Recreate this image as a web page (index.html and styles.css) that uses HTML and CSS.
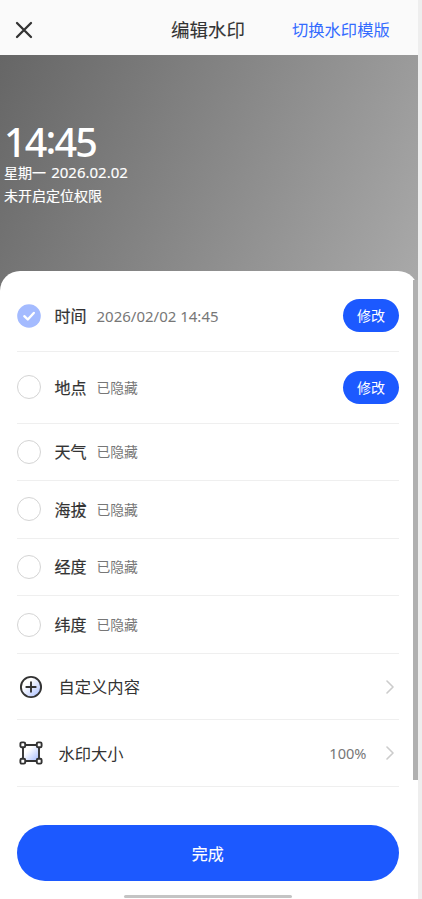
FILE: index.html
```html
<!DOCTYPE html>
<html lang="zh-CN">
<head>
<meta charset="utf-8">
<title>编辑水印</title>
<link rel="stylesheet" href="styles.css">
</head>
<body>
<div class="screen">
  <header class="bar">
    <svg class="close" viewBox="0 0 18 18"><path d="M2 2 16 16M16 2 2 16"/></svg>
    <h1 class="title">编辑水印</h1>
    <a class="switch">切换水印模版</a>
  </header>
  <section class="preview">
    <div class="clock">14<span class="colon">:</span>45</div>
    <div class="line">星期一 <span class="date">2026.02.02</span></div>
    <div class="line place">未开启定位权限</div>
  </section>
  <main class="sheet">
    <div class="row tall">
      <svg class="check" viewBox="0 0 24 24"><circle cx="12" cy="12" r="11.8" fill="#a4bbff"/><path d="m7.3 12.2 3.5 3.3 6-6.5"/></svg>
      <span class="name">时间</span><span class="value time">2026/02/02 14:45</span><button class="edit">修改</button>
    </div>
    <div class="row tall">
      <i class="radio"></i><span class="name">地点</span><span class="value">已隐藏</span><button class="edit">修改</button>
    </div>
    <div class="row"><i class="radio"></i><span class="name">天气</span><span class="value">已隐藏</span></div>
    <div class="row"><i class="radio"></i><span class="name">海拔</span><span class="value">已隐藏</span></div>
    <div class="row"><i class="radio"></i><span class="name">经度</span><span class="value">已隐藏</span></div>
    <div class="row"><i class="radio"></i><span class="name">纬度</span><span class="value">已隐藏</span></div>
    <div class="row link">
      <svg class="icon" viewBox="0 0 24 24">
        <defs><linearGradient id="tint" x1="0.1" y1="0.1" x2="1" y2="1"><stop offset="0.25" stop-color="#fff"/><stop offset="1" stop-color="#a3baff"/></linearGradient></defs>
        <circle cx="12" cy="12" r="10.1" fill="url(#tint)"/><path d="M12 7.3v9.4M7.3 12h9.4"/>
      </svg>
      <span class="label">自定义内容</span>
      <svg class="arrow" viewBox="0 0 8 14"><path d="m1 1 6 6-6 6"/></svg>
    </div>
    <div class="row link">
      <svg class="icon" viewBox="0 0 24 24">
        <path d="M4 4h16v16H4z" fill="url(#tint)"/>
        <g fill="#fff"><rect x="1.4" y="1.4" width="4.8" height="4.8" rx="1.3"/><rect x="17.8" y="1.4" width="4.8" height="4.8" rx="1.3"/><rect x="1.4" y="17.8" width="4.8" height="4.8" rx="1.3"/><rect x="17.8" y="17.8" width="4.8" height="4.8" rx="1.3"/></g>
      </svg>
      <span class="label">水印大小</span>
      <span class="percent">100%</span>
      <svg class="arrow" viewBox="0 0 8 14"><path d="m1 1 6 6-6 6"/></svg>
    </div>
    <button class="done">完成</button>
    <div class="home"></div>
  </main>
  <div class="thumb"></div>
</div>
</body>
</html>
```
FILE: styles.css
```css
* { box-sizing: border-box; }
body {
  margin: 0;
  height: 899px;
  overflow: hidden;
  background: #eee;
  font-family: "Noto Sans CJK SC", sans-serif;
  color: #333;
}
.screen {
  position: relative;
  width: 418px;
  height: 899px;
  display: flex;
  flex-direction: column;
  background: #fff;
}
.bar {
  height: 55px;
  flex: none;
  display: grid;
  grid-template-columns: 171px 121px 1fr;
  align-items: center;
  padding-top: 3px;
  background: #fafafa;
}
.close { width: 18px; height: 18px; margin: 1px 0 0 15px; fill: none; stroke: #333; stroke-width: 2.3; stroke-linecap: round; }
.title { margin: 0; font-size: 18.5px; font-weight: 400; -webkit-text-stroke: 0.1px; line-height: 24px; white-space: nowrap; }
.switch { font-size: 16.3px; line-height: 24px; color: #336bff; white-space: nowrap; }
.preview {
  height: 241px;
  flex: none;
  padding: 67px 0 0 4px;
  color: #fff;
  background: linear-gradient(116deg, #666 0%, #aaa 100%);
}
.clock { font-family: "Noto Sans", sans-serif; font-size: 39.5px; line-height: 41px; font-weight: 500; letter-spacing: -1.8px; white-space: nowrap; }
.colon { display: inline-block; transform: translateY(-3px); }
.line { font-size: 14px; line-height: 18px; font-weight: 400; -webkit-text-stroke: 0.15px; white-space: nowrap; }
.date { font-family: "Noto Sans", sans-serif; font-size: 15px; margin-left: 2px; }
.place { margin-top: 5px; }
.sheet {
  height: 628px;
  flex: none;
  margin-top: -25px;
  padding: 9.5px 19px 0 16.5px;
  border-radius: 20px 20px 0 0;
  background: #fff;
}
.row { height: 57.6px; display: flex; align-items: center; border-bottom: 1.3px solid #efefef; }
.tall { height: 71.5px; }
.link { height: 66.5px; }
.radio { width: 24px; height: 24px; border: 1.4px solid #d4d4d4; border-radius: 50%; flex: none; }
.check { width: 24px; height: 24px; flex: none; fill: none; stroke: #fff; }
.check path { stroke-width: 2.4; stroke-linecap: round; stroke-linejoin: round; }
.check circle { stroke: none; }
.name { margin-left: 14px; width: 42px; font-size: 16px; font-weight: 400; -webkit-text-stroke: 0.2px; line-height: 24px; }
.value { font-size: 13.8px; line-height: 22px; color: #777; white-space: nowrap; }
.name, .value, .label { margin-bottom: 1px; }
.time { font-family: "Noto Sans", sans-serif; font-size: 15px; margin-bottom: 0; }
.edit, .done { border: 0; padding: 0; color: #fff; background: #1c59ff; font-family: inherit; }
.edit { margin-left: auto; width: 56px; height: 33px; border-radius: 17px; font-size: 14px; line-height: 32px; padding-bottom: 1px; }
.icon { width: 24px; height: 24px; margin-left: 2px; fill: none; stroke: #333; stroke-width: 1.9; stroke-linecap: round; stroke-linejoin: round; }
.label { margin-left: 16px; font-size: 16.3px; line-height: 24px; white-space: nowrap; }
.arrow { width: 8px; height: 14px; margin: 0 5.5px 0 auto; fill: none; stroke: #ccc; stroke-width: 1.6; stroke-linecap: round; stroke-linejoin: round; }
.percent { margin-left: auto; font-family: "Noto Sans", sans-serif; font-size: 14.6px; color: #777; }
.percent + .arrow { margin-left: 19px; }
.done { display: block; width: 382.5px; height: 56px; margin-top: 38px; border-radius: 28px; font-size: 16px; font-weight: 400; -webkit-text-stroke: 0.1px; }
.home { width: 168px; height: 3px; margin: 14.5px 0 0 107.5px; border-radius: 2px; background: #c4c4c4; }
.thumb { position: absolute; right: 0; top: 280px; width: 5px; height: 500px; background: #b0b0b0; }
```
